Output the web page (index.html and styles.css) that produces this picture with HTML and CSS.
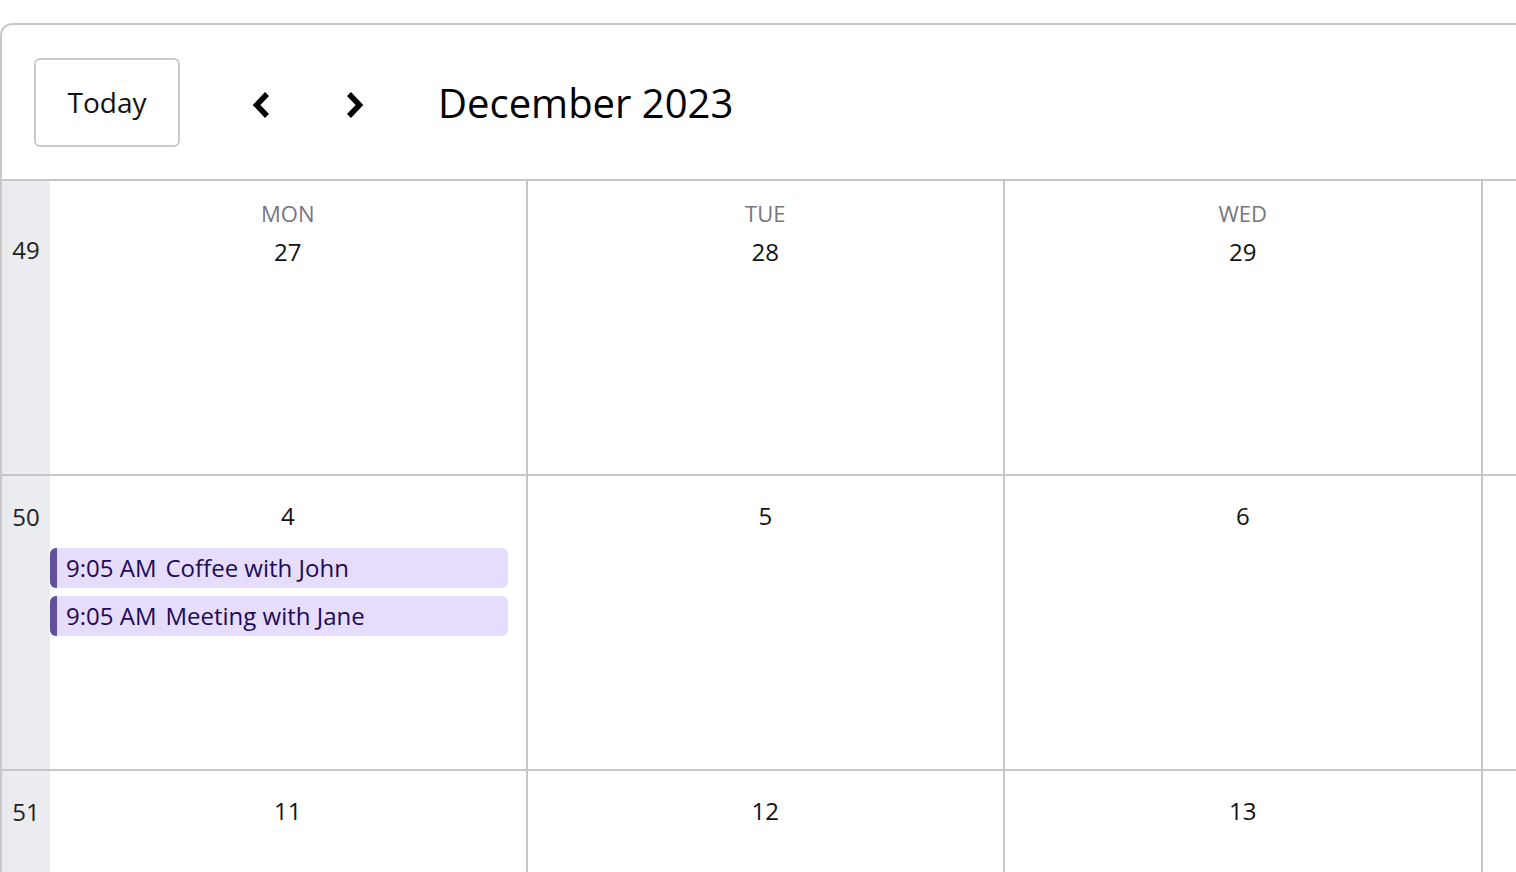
FILE: index.html
```html
<!DOCTYPE html>
<html lang="en">
<head>
<meta charset="utf-8">
<title>Calendar</title>
<link rel="stylesheet" href="styles.css">
</head>
<body>
<div class="calendar">
  <div class="toolbar">
    <button class="btn-today">Today</button>
    <button class="nav-btn" aria-label="Previous">
      <svg width="22" height="30" viewBox="0 0 22 30"><polyline points="18,4 7.5,15 18,26" fill="none" stroke="#000" stroke-width="5.5"/></svg>
    </button>
    <button class="nav-btn" aria-label="Next">
      <svg width="22" height="30" viewBox="0 0 22 30"><polyline points="4,4 14.5,15 4,26" fill="none" stroke="#000" stroke-width="5.5"/></svg>
    </button>
    <h1 class="title">December 2023</h1>
  </div>
  <div class="grid">
    <div class="week first"><span>49</span></div>
    <div class="day"><div class="dow">MON</div><div class="date">27</div></div>
    <div class="day"><div class="dow">TUE</div><div class="date">28</div></div>
    <div class="day"><div class="dow">WED</div><div class="date">29</div></div>
    <div class="day"><div class="dow">THU</div><div class="date">30</div></div>
    <div class="day"><div class="dow">FRI</div><div class="date">1</div></div>
    <div class="day"><div class="dow">SAT</div><div class="date">2</div></div>
    <div class="day"><div class="dow">SUN</div><div class="date">3</div></div>

    <div class="week"><span>50</span></div>
    <div class="day"><div class="date">4</div>
      <div class="events">
        <div class="event"><span class="time">9:05 AM</span>Coffee with John</div>
        <div class="event"><span class="time">9:05 AM</span>Meeting with Jane</div>
      </div>
    </div>
    <div class="day"><div class="date">5</div></div>
    <div class="day"><div class="date">6</div></div>
    <div class="day"><div class="date">7</div></div>
    <div class="day"><div class="date">8</div></div>
    <div class="day"><div class="date">9</div></div>
    <div class="day"><div class="date">10</div></div>

    <div class="week"><span>51</span></div>
    <div class="day"><div class="date">11</div></div>
    <div class="day"><div class="date">12</div></div>
    <div class="day"><div class="date">13</div></div>
    <div class="day"><div class="date">14</div></div>
    <div class="day"><div class="date">15</div></div>
    <div class="day"><div class="date">16</div></div>
    <div class="day"><div class="date">17</div></div>

    <div class="week"><span>52</span></div>
    <div class="day"><div class="date">18</div></div>
    <div class="day"><div class="date">19</div></div>
    <div class="day"><div class="date">20</div></div>
    <div class="day"><div class="date">21</div></div>
    <div class="day"><div class="date">22</div></div>
    <div class="day"><div class="date">23</div></div>
    <div class="day"><div class="date">24</div></div>
  </div>
</div>
</body>
</html>
```

FILE: styles.css
```css
html, body {
  margin: 0;
  padding: 0;
  overflow: hidden;
  background: #fff;
}

body {
  font-family: "Open Sans", "Liberation Sans", sans-serif;
  color: #111;
}

.calendar {
  margin-top: 23px;
  width: max-content;
  border: 2px solid #c8c8c8;
  border-top-left-radius: 12px;
  border-top-right-radius: 12px;
}

.toolbar {
  display: flex;
  align-items: center;
  height: 154px;
  padding: 0 32px;
  border-bottom: 2px solid #c6c6c6;
}

.btn-today {
  height: 89px;
  width: 146px;
  padding: 0;
  margin-right: 32px;
  border: 2px solid #cbcbcb;
  border-radius: 6px;
  background: #fff;
  font-family: inherit;
  font-size: 28px;
  color: #111;
}

.nav-btn {
  width: 96px;
  height: 60px;
  padding: 0;
  margin-top: 5px;
  border: none;
  background: transparent;
  display: flex;
  align-items: center;
  justify-content: center;
}

.title {
  margin: 0 0 0 34px;
  font-size: 40px;
  font-weight: 400;
  color: #000;
}

.grid {
  display: grid;
  grid-template-columns: 48px repeat(7, 477.5px);
  grid-auto-rows: 295px;
}

.week {
  background: #ebecf0;
  border-bottom: 2px solid #c6c6c6;
  text-align: center;
  font-size: 24px;
  color: #222;
  padding-top: 25px;
  line-height: 32px;
}

.week.first {
  padding-top: 53px;
}

.day {
  border-right: 2px solid #c6c6c6;
  border-bottom: 2px solid #c6c6c6;
  padding-top: 16px;
}

.dow {
  text-align: center;
  font-size: 22px;
  line-height: 32px;
  color: #76767f;
}

.date {
  margin-top: 8px;
  text-align: center;
  font-size: 24px;
  line-height: 32px;
  color: #111;
}

.dow + .date {
  margin-top: 7px;
}

.events {
  margin-top: 16px;
  padding-right: 18px;
  display: flex;
  flex-direction: column;
  gap: 8px;
}

.event {
  height: 40px;
  line-height: 40px;
  background: #e6dcfb;
  border-left: 7px solid #62509c;
  border-radius: 6px;
  padding-left: 9px;
  font-size: 24px;
  color: #1c0b57;
  white-space: nowrap;
}

.time {
  margin-right: 9px;
}
```
